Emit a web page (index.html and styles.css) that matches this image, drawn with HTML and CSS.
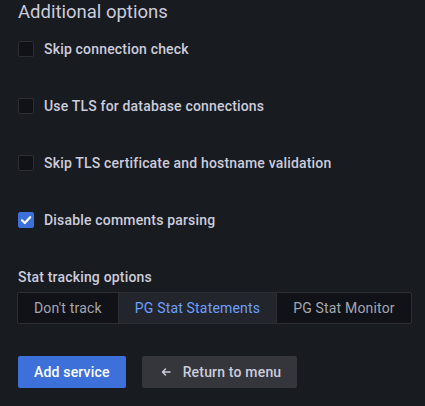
FILE: index.html
```html
<!DOCTYPE html>
<html>
<head>
<meta charset="utf-8">
<link rel="stylesheet" href="styles.css">
</head>
<body>
<div class="page">
  <h3 class="title">Additional options</h3>
  <div class="checks">
    <label class="check"><span class="box"></span><span class="check-label">Skip connection check</span></label>
    <label class="check"><span class="box"></span><span class="check-label">Use TLS for database connections</span></label>
    <label class="check"><span class="box"></span><span class="check-label">Skip TLS certificate and hostname validation</span></label>
    <label class="check"><span class="box checked"><svg viewBox="0 0 16 16" width="16" height="16"><path d="M4 8.3 L6.8 11 L12.2 5.2" fill="none" stroke="#fff" stroke-width="2.2" stroke-linecap="round" stroke-linejoin="round"/></svg></span><span class="check-label">Disable comments parsing</span></label>
  </div>
  <div class="field-label">Stat tracking options</div>
  <div class="radio-group">
    <div class="radio">Don't track</div>
    <div class="radio active">PG Stat Statements</div>
    <div class="radio">PG Stat Monitor</div>
  </div>
  <div class="actions">
    <button class="btn primary">Add service</button>
    <button class="btn secondary"><svg class="arrow" viewBox="0 0 16 16" width="16" height="16"><path d="M12 8 H4.5 M7.5 5 L4.5 8 L7.5 11" fill="none" stroke="#ccccdc" stroke-width="1.5" stroke-linecap="round" stroke-linejoin="round"/></svg>Return to menu</button>
  </div>
</div>
</body>
</html>
```

FILE: styles.css
```css
html, body {
  margin: 0;
  padding: 0;
  background: #181b1f;
}
body {
  font-family: Roboto, "Liberation Sans", sans-serif;
  color: #ccccdc;
  letter-spacing: 0.18px;
}
.page {
  padding: 0 18px;
  display: flex;
  flex-direction: column;
}
.title {
  margin: 0;
  font-size: 18.5px;
  line-height: 24px;
  font-weight: 400;
  letter-spacing: 0;
}
.checks {
  margin-top: 17px;
  display: flex;
  flex-direction: column;
  gap: 41px;
}
.check {
  display: flex;
  align-items: center;
  height: 16px;
  gap: 10px;
}
.box {
  width: 16px;
  height: 16px;
  box-sizing: border-box;
  border: 1px solid #2c2e33;
  border-radius: 2px;
  background: #111217;
  display: flex;
  flex-shrink: 0;
}
.box.checked {
  background: #3d71d9;
  border-color: #3d71d9;
}
.box.checked svg {
  margin: -1px;
}
.check-label {
  font-size: 14px;
  font-weight: 500;
  line-height: 16px;
  white-space: nowrap;
}
.field-label {
  margin-top: 39px;
  font-size: 14px;
  font-weight: 500;
  line-height: 20px;
}
.radio-group {
  margin-top: 5px;
  margin-left: -1px;
  display: flex;
  align-self: flex-start;
  height: 32px;
  box-sizing: border-box;
  border: 1px solid #2c2e33;
  border-radius: 2px;
  background: #111217;
}
.radio {
  padding: 0 16px;
  display: flex;
  align-items: center;
  flex-shrink: 0;
  white-space: nowrap;
  font-size: 14px;
  color: #a4a6b0;
}
.radio.active {
  background: #22252b;
  color: #6e9fff;
  border-left: 1px solid #2c2e33;
  border-right: 1px solid #2c2e33;
}
.actions {
  margin-top: 32px;
  display: flex;
  gap: 16px;
}
.btn {
  height: 32px;
  padding: 0 16px;
  border: none;
  border-radius: 2px;
  font-family: Roboto, "Liberation Sans", sans-serif;
  font-size: 14px;
  font-weight: 500;
  letter-spacing: 0.18px;
  white-space: nowrap;
  display: flex;
  align-items: center;
}
.primary {
  background: #3d71d9;
  color: #ffffff;
}
.secondary {
  background: #34363b;
  color: #ccccdc;
}
.arrow {
  margin-right: 9px;
}
```
